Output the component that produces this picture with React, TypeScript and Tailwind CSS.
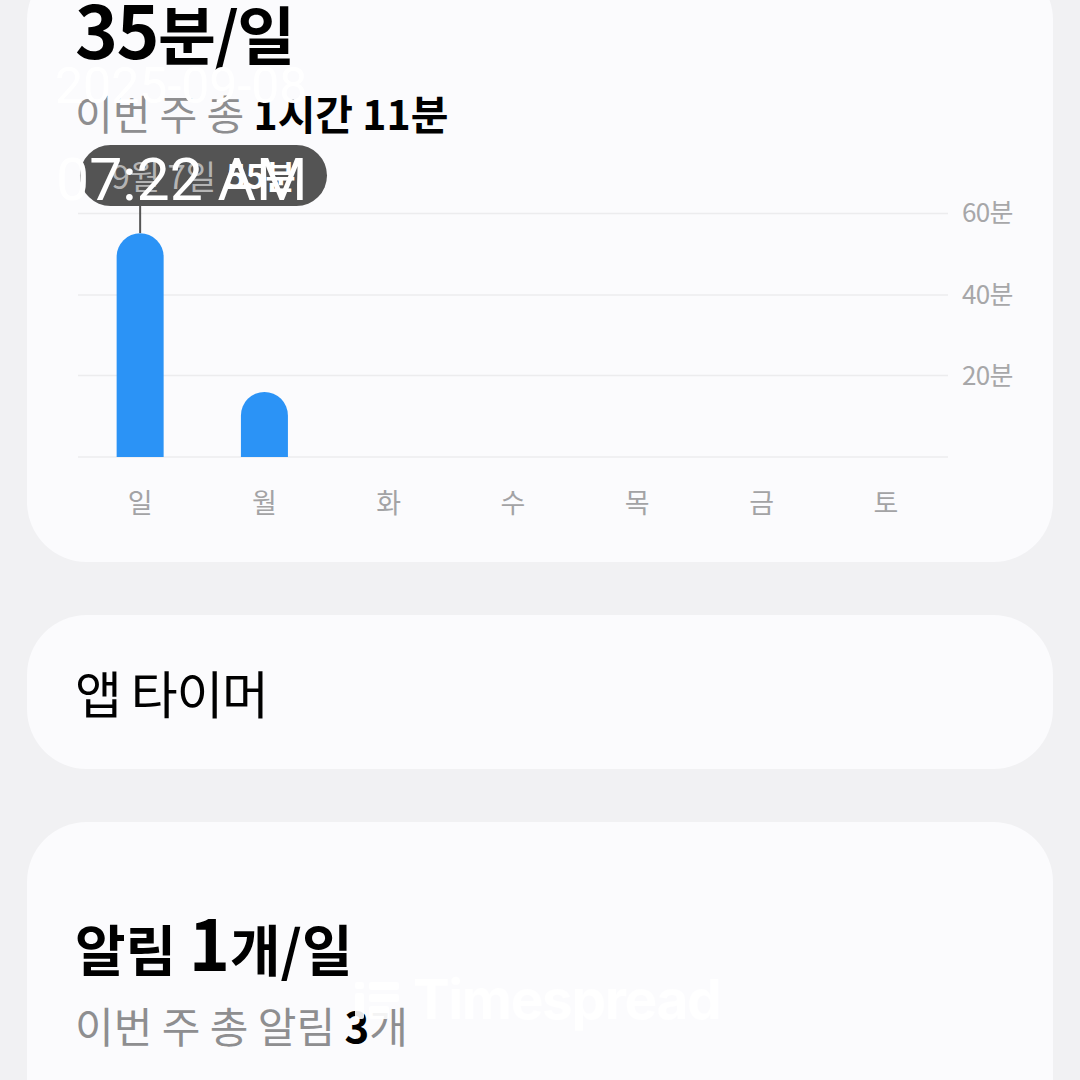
import React from 'react';

const days = ['일', '월', '화', '수', '목', '금', '토'];
const minutes = [55, 16, 0, 0, 0, 0, 0];

const PLOT_W = 870;
const PLOT_H = 244;
const COL = PLOT_W / 7;
const BAR_W = 47;

const barPath = (i: number, value: number) => {
    const x = COL * i + COL / 2 - BAR_W / 2;
    const top = PLOT_H - (value / 60) * PLOT_H;
    const r = BAR_W / 2;
    return `M${x},${PLOT_H} V${top + r} A${r},${r} 0 0 1 ${x + BAR_W},${top + r} V${PLOT_H} Z`;
};

const WeeklyChart: React.FC = () => {
    return (
        <div className="relative pt-[78px]">
            {/* tooltip for the selected day */}
            <div className="absolute left-[5px] top-[10px] flex h-[61px] w-[247px] items-center justify-center gap-[10px] rounded-full bg-[#545454] text-[33px] leading-none whitespace-nowrap">
                <span className="text-[#b4b4b4]">9월 7일</span>
                <span className="font-bold text-white">55분</span>
            </div>

            <div className="flex">
                <svg width={PLOT_W} height={PLOT_H + 1} className="ml-[3px] overflow-visible">
                    {[0.5, 82, 162.5, 244].map(y => (
                        <line key={y} x1={0} x2={PLOT_W} y1={y} y2={y} stroke="#ececee" strokeWidth={1.5} />
                    ))}
                    <line x1={COL / 2} x2={COL / 2} y1={-8} y2={20} stroke="#555555" strokeWidth={2} />
                    {minutes.map((m, i) => (m > 0 ? <path key={i} d={barPath(i, m)} fill="#2b93f6" /> : null))}
                </svg>
                <div className="relative ml-[14px] flex-1 whitespace-nowrap text-[26px] leading-none tracking-tight text-[#a7a7a9]">
                    <span className="absolute top-[-15px]">60분</span>
                    <span className="absolute top-[67px]">40분</span>
                    <span className="absolute top-[148px]">20분</span>
                </div>
            </div>

            <div className="ml-[3px] mt-[26px] grid w-[870px] grid-cols-7 text-center text-[27px] leading-[36px] text-[#a3a3a5]">
                {days.map(d => (
                    <span key={d}>{d}</span>
                ))}
            </div>
        </div>
    );
};

const App: React.FC = () => {
    return (
        <div
            className="relative h-[1080px] overflow-hidden bg-[#f1f1f3] text-black"
            style={{ fontFamily: '"Noto Sans CJK KR", "Noto Sans", sans-serif' }}
        >
            <div className="flex flex-col gap-[53px] px-[27px]">
                {/* 사용 시간 */}
                <section className="mt-[-40px] rounded-[60px] bg-[#fbfbfd] px-[48px] pb-[42px] pt-[27px]">
                    <h1 className="whitespace-nowrap text-[63px] font-bold leading-[80px] tracking-tight">
                        <span className="text-[73px]">35</span>분/일
                    </h1>
                    <p className="mt-[17px] whitespace-nowrap text-[41px] leading-[46px] text-[#8e8e90]">
                        이번 주 총 <span className="font-bold text-black">1시간 11분</span>
                    </p>
                    <WeeklyChart />
                </section>

                {/* 앱 타이머 */}
                <section className="flex h-[154px] items-center rounded-[60px] bg-[#fbfbfd] px-[48px]">
                    <span className="text-[51px] leading-none tracking-tight">앱 타이머</span>
                </section>

                {/* 알림 */}
                <section className="h-[400px] rounded-[60px] bg-[#fbfbfd] px-[48px] pt-[83px]">
                    <div className="whitespace-nowrap text-[55px] font-bold leading-[72px]">
                        알림 <span className="text-[70px] leading-[72px]">1</span>개/일
                    </div>
                    <p className="mt-[19px] whitespace-nowrap text-[42px] leading-[46px] text-[#8e8e90]">
                        이번 주 총 알림 <span className="font-bold text-black">3</span>개
                    </p>
                </section>
            </div>

            {/* timestamp overlay */}
            <div
                className="pointer-events-none absolute left-[55px] top-[61px] text-[50px] leading-none text-white"
                style={{ fontFamily: 'Roboto, "Liberation Sans", sans-serif' }}
            >
                2025-09-08
            </div>
            <div
                className="pointer-events-none absolute left-[56px] top-[150px] text-[59px] leading-none text-white"
                style={{ fontFamily: 'Roboto, "Liberation Sans", sans-serif' }}
            >
                07:22 AM
            </div>

            {/* Timespread watermark */}
            <div
                className="pointer-events-none absolute left-[355px] top-[972px] flex items-center gap-[14px] text-white/90"
                style={{ fontFamily: 'Inter, "Liberation Sans", sans-serif' }}
            >
                <svg width="44" height="40" viewBox="0 0 44 40" fill="currentColor">
                    <rect x="0" y="2" width="9" height="7" rx="2" />
                    <rect x="0" y="13" width="9" height="26" rx="2" />
                    <rect x="14" y="2" width="30" height="8" rx="2" />
                    <rect x="14" y="14" width="30" height="8" rx="2" />
                    <rect x="14" y="26" width="20" height="13" rx="2" />
                </svg>
                <span className="text-[55px] font-bold leading-none tracking-tight">Timespread</span>
            </div>
        </div>
    );
};

export default App;
